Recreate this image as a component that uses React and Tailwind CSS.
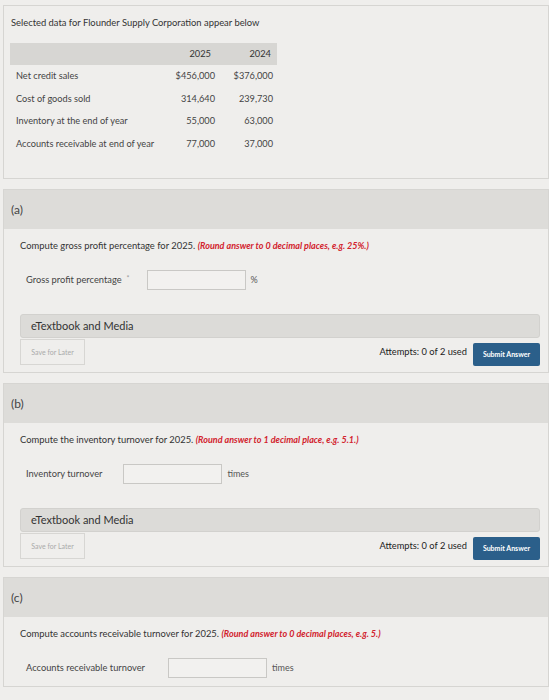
import React from 'react';

const font = { fontFamily: 'Lato, "Open Sans", sans-serif' };

const rows = [
  ['Net credit sales', '$456,000', '$376,000'],
  ['Cost of goods sold', '314,640', '239,730'],
  ['Inventory at the end of year', '55,000', '63,000'],
  ['Accounts receivable at end of year', '77,000', '37,000'],
];

function Part({ letter, prompt, hint, label, inputMl, unit, star, footer = true, className = '' }) {
  return (
    <div className={`border border-[#d6d5d2] bg-[#efeeec] ${className}`}>
      <div className="h-[39px] bg-[#dddcd9] pl-[7px] flex items-center text-[12px] text-[#444]">({letter})</div>
      <div className="pl-[16px] pr-[8px] pt-[11px] pb-[7px]">
        <p className="text-[9.4px] leading-[12px] text-[#333]">
          {prompt} <span className="italic font-bold text-[9px] text-[#d2222d]">{hint}</span>
        </p>
        <div className="flex items-center mt-[17px] pl-[6px] h-[22px]">
          <span className="text-[9.3px] text-[#444]">{label}</span>
          {star && <span className="text-[7px] text-[#999] ml-[5px] -mt-[4px]">*</span>}
          <div className="h-[20px] w-[99px] border border-[#c9c8c5] bg-[#f2f1ef]" style={{ marginLeft: inputMl }} />
          <span className="text-[9px] text-[#555] ml-[5px]">{unit}</span>
        </div>
        {footer && (
          <>
            <div className="mt-[23px] h-[24px] rounded-[3px] bg-[#dcdbd8] border border-[#d2d1ce] flex items-center pl-[10px] text-[11px] text-[#333]">
              eTextbook and Media
            </div>
            <div className="flex items-center mt-[1px] h-[26px]">
              <div className="h-[26px] w-[65px] border border-[#d7d6d3] flex items-center justify-center text-[7px] text-[#aaa]">Save for Later</div>
              <div className="ml-auto text-[9.3px] text-[#222]">Attempts: 0 of 2 used</div>
              <div className="ml-[6px] mt-[4px] h-[23px] w-[67px] bg-[#2b5f8a] rounded-[2px] flex items-center justify-center text-[7px] font-bold text-white">Submit Answer</div>
            </div>
          </>
        )}
      </div>
    </div>
  );
}

export default function App() {
  return (
    <div className="w-[549px] h-[700px] overflow-hidden bg-[#efeeec] pl-[3px] pt-[5px]" style={font}>
      <div className="border border-[#d6d5d2] h-[174px] pl-[6px] pt-[11px]">
        <p className="text-[9.4px] leading-[12px] text-[#333] pl-[1px]">Selected data for Flounder Supply Corporation appear below</p>
        <div className="mt-[14px] w-[267px]">
          <div className="h-[22px] bg-[#d7d6d3] flex items-center text-[9.3px] text-[#333]">
            <span className="w-[155px] shrink-0" />
            <span className="w-[50px] shrink-0 text-right pr-[4px]">2025</span>
            <span className="w-[58px] shrink-0 text-right pr-[2px]">2024</span>
          </div>
          {rows.map(([name, a, b]) => (
            <div key={name} className="h-[22.5px] flex items-center text-[9.2px] text-[#444]">
              <span className="w-[155px] shrink-0 pl-[6px] whitespace-nowrap">{name}</span>
              <span className="w-[50px] shrink-0 text-right">{a}</span>
              <span className="w-[58px] shrink-0 text-right">{b}</span>
            </div>
          ))}
        </div>
      </div>
      <Part
        className="mt-[10px]"
        letter="a"
        prompt="Compute gross profit percentage for 2025."
        hint="(Round answer to 0 decimal places, e.g. 25%.)"
        label="Gross profit percentage"
        star
        inputMl={17}
        unit="%"
      />
      <Part
        className="mt-[10px]"
        letter="b"
        prompt="Compute the inventory turnover for 2025."
        hint="(Round answer to 1 decimal place, e.g. 5.1.)"
        label="Inventory turnover"
        inputMl={21}
        unit="times"
      />
      <Part
        className="mt-[10px]"
        letter="c"
        prompt="Compute accounts receivable turnover for 2025."
        hint="(Round answer to 0 decimal places, e.g. 5.)"
        label="Accounts receivable turnover"
        inputMl={23}
        unit="times"
        footer={false}
      />
    </div>
  );
}
